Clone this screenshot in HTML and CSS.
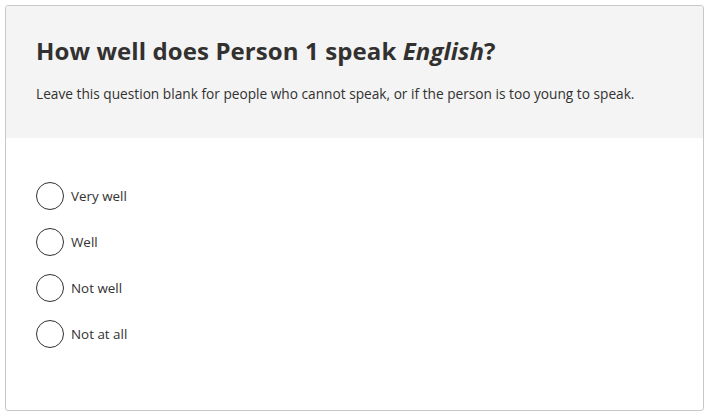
FILE: index.html
```html
<!DOCTYPE html>
<html lang="en">
<head>
<meta charset="utf-8">
<title>Question</title>
<link rel="stylesheet" href="styles.css">
</head>
<body>
<div class="card">
  <div class="header">
    <h1 class="title">How well does Person 1 speak <em>English</em>?</h1>
    <p class="hint">Leave this question blank for people who cannot speak, or if the person is too young to speak.</p>
  </div>
  <div class="options">
    <label class="option"><span class="radio"></span><span class="label">Very well</span></label>
    <label class="option"><span class="radio"></span><span class="label">Well</span></label>
    <label class="option"><span class="radio"></span><span class="label">Not well</span></label>
    <label class="option"><span class="radio"></span><span class="label">Not at all</span></label>
  </div>
</div>
</body>
</html>
```
FILE: styles.css
```css
html, body {
  margin: 0;
  padding: 0;
  background: #fff;
}
body {
  padding: 5px 6px 6px 5px;
  font-family: "Open Sans", "Noto Sans", sans-serif;
  color: #323130;
}
.card {
  width: 699px;
  height: 406px;
  box-sizing: border-box;
  border: 1px solid #c8c8c8;
  border-radius: 3px;
  overflow: hidden;
  display: flex;
  flex-direction: column;
}
.header {
  background: #f4f4f4;
  height: 132px;
  box-sizing: border-box;
  padding: 29px 30px 0 30px;
}
.title {
  margin: 0;
  font-size: 24px;
  line-height: 32px;
  font-weight: 700;
  letter-spacing: 0.1px;
  color: #323130;
}
.title em {
  font-style: italic;
}
.hint {
  margin: 17px 0 0 0;
  font-size: 13.7px;
  line-height: 20px;
  color: #323130;
}
.options {
  display: flex;
  flex-direction: column;
  gap: 18px;
  padding: 44px 30px 0 30px;
}
.option {
  display: flex;
  align-items: center;
  gap: 7px;
  height: 28px;
}
.radio {
  width: 28px;
  height: 28px;
  box-sizing: border-box;
  border: 1px solid #323130;
  border-radius: 50%;
  flex: none;
}
.label {
  font-size: 13.4px;
  line-height: 20px;
}
```
